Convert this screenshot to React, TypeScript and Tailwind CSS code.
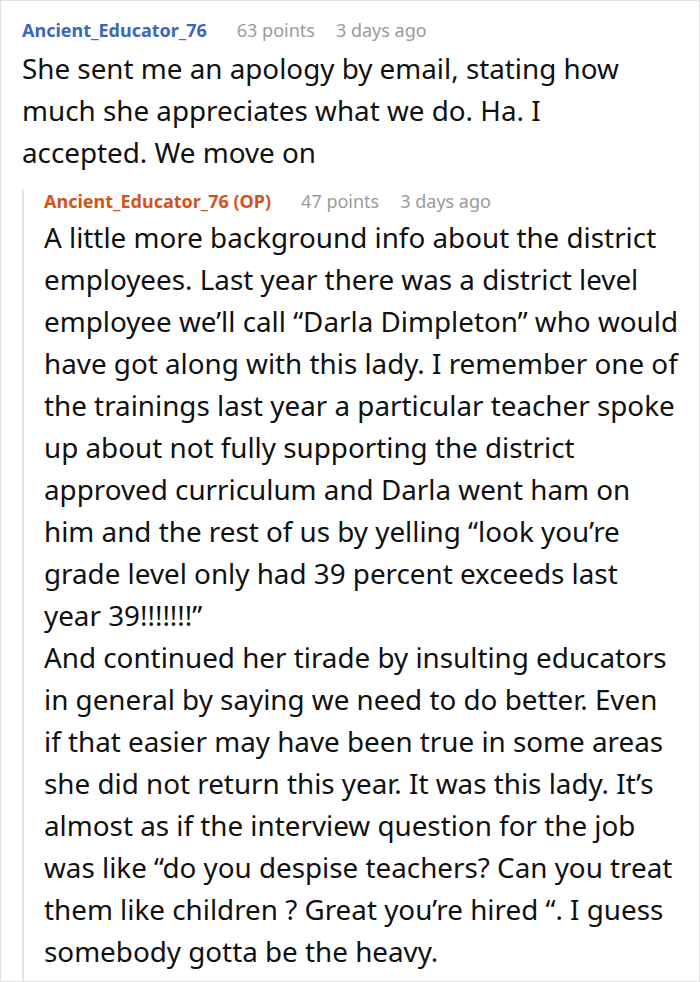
const comment = {
  author: "Ancient_Educator_76",
  points: 63,
  age: "3 days ago",
  body: "She sent me an apology by email, stating how much she appreciates what we do. Ha. I accepted. We move on",
};

const reply = {
  author: "Ancient_Educator_76 (OP)",
  points: 47,
  age: "3 days ago",
  body: [
    "A little more background info about the district employees. Last year there was a district level employee we\u2019ll call \u201cDarla Dimpleton\u201d who would have got along with this lady. I remember one of the trainings last year a particular teacher spoke up about not fully supporting the district approved curriculum and Darla went ham on him and the rest of us by yelling \u201clook you\u2019re grade level only had 39 percent exceeds last year 39!!!!!!!\u201d",
    "And continued her tirade by insulting educators in general by saying we need to do better. Even if that easier may have been true in some areas she did not return this year. It was this lady. It\u2019s almost as if the interview question for the job was like \u201cdo you despise teachers? Can you treat them like children ? Great you\u2019re hired \u201c. I guess somebody gotta be the heavy.",
  ],
};

function Meta({ author, points, age, op }: { author: string; points: number; age: string; op?: boolean }) {
  return (
    <div className="flex items-center text-[18px] leading-[24px]">
      <span className={`font-bold ${op ? "text-[#d4531c]" : "text-[#3b68b8]"}`}>{author}</span>
      <span className="ml-[30px] text-[#9b9b9b]">{points} points</span>
      <span className="ml-[21px] text-[#9b9b9b]">{age}</span>
    </div>
  );
}

export default function App() {
  return (
    <div
      className="w-[700px] h-[982px] border border-[#e2e2e2] bg-white overflow-hidden text-[#111]"
      style={{ fontFamily: '"Noto Sans", "Open Sans", sans-serif' }}
    >
      <div className="pl-[21px] pr-[19px] pt-[17px]">
        <Meta author={comment.author} points={comment.points} age={comment.age} />
        <p className="text-[27.8px] leading-[42px] mt-[5px] pr-[28px]">{comment.body}</p>

        {/* nested reply */}
        <div className="mt-[16px] border-l-2 border-[#e6e6e6] pl-[20px] pb-[12px]">
          <Meta author={reply.author} points={reply.points} age={reply.age} op />
          {reply.body.map((para, i) => (
            <p key={i} className="text-[27.8px] leading-[42px] first-of-type:mt-[3px]">
              {para}
            </p>
          ))}
        </div>
      </div>
    </div>
  );
}
